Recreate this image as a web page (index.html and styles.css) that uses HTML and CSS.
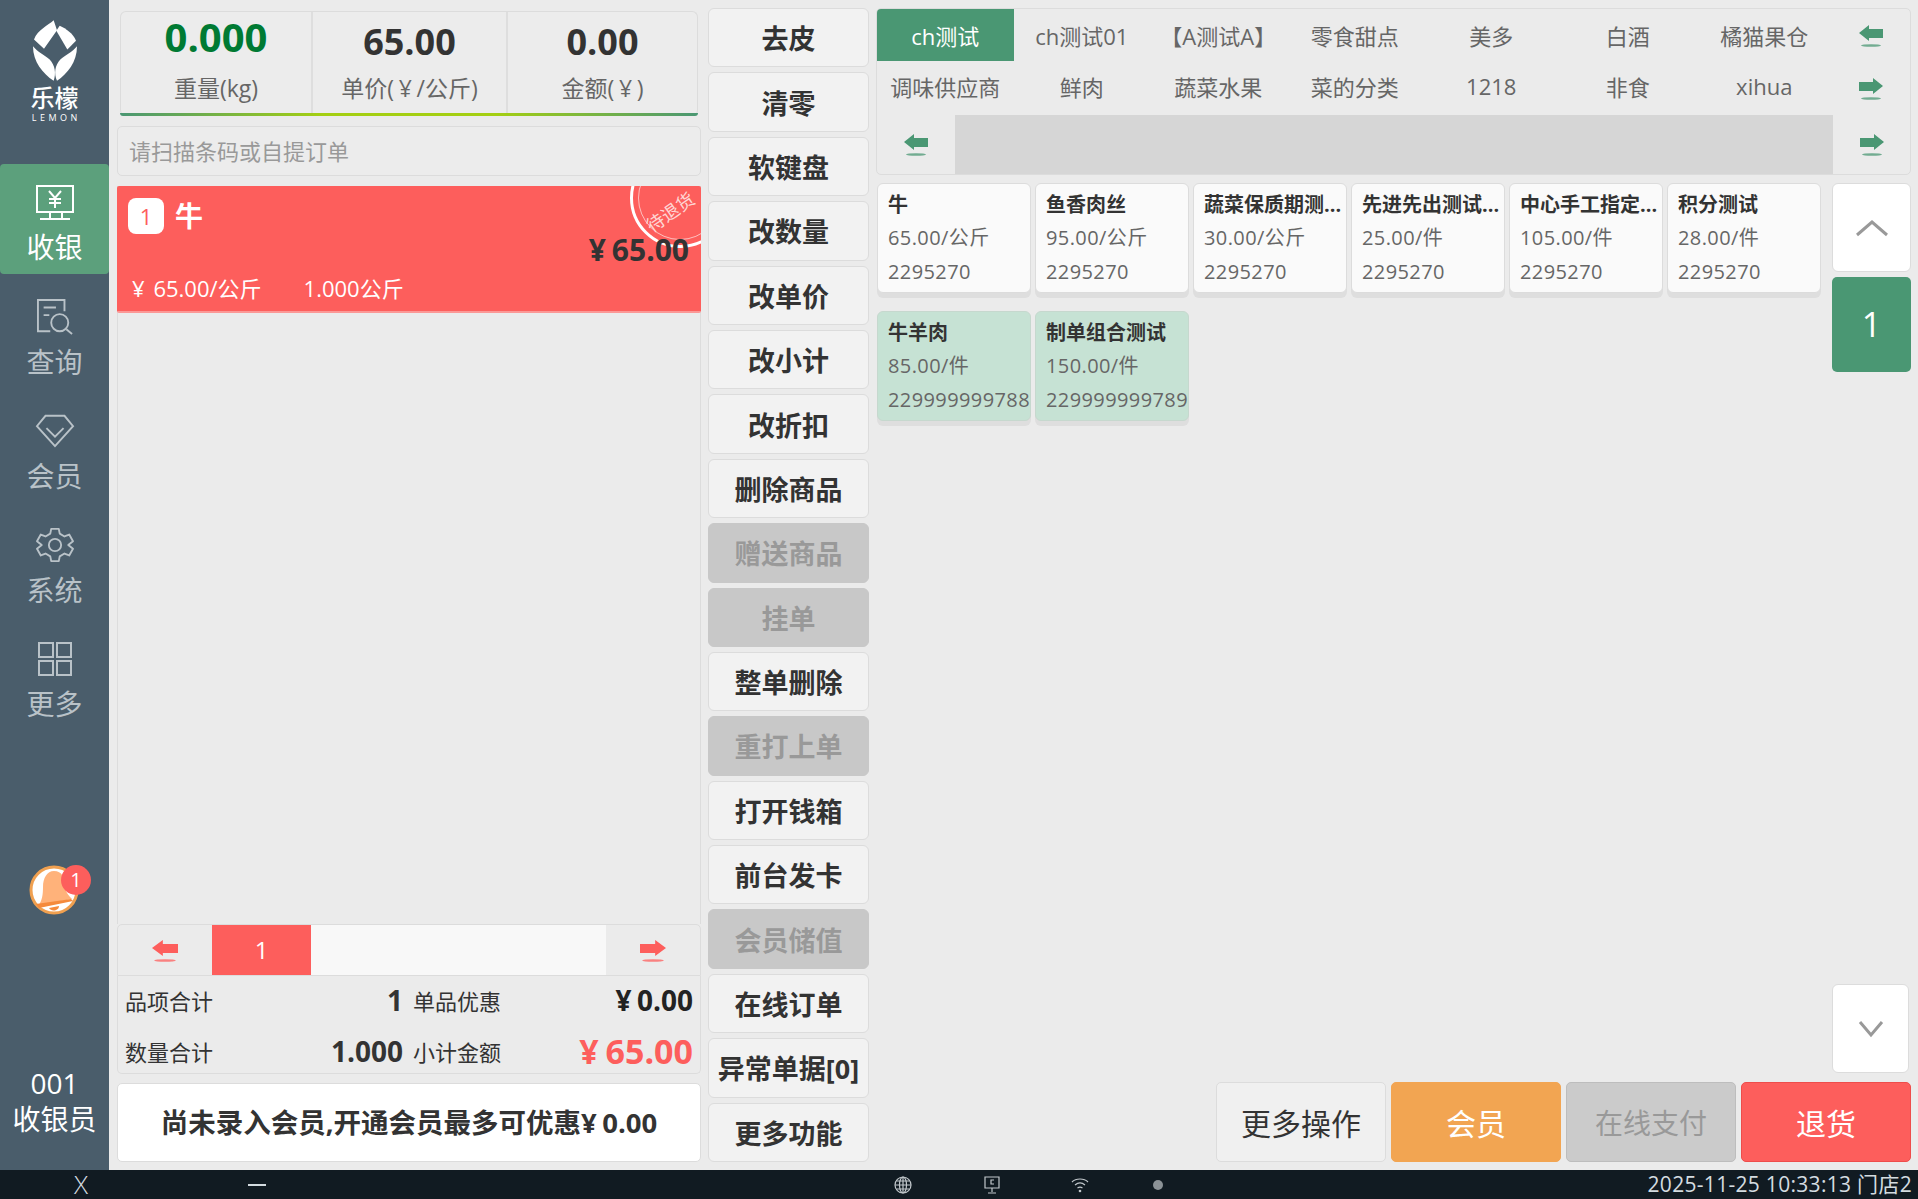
FILE: index.html
```html
<!DOCTYPE html>
<html lang="zh-CN">
<head>
<meta charset="utf-8">
<title>乐檬收银</title>
<link rel="stylesheet" href="styles.css">
</head>
<body>
<svg class="defs" width="0" height="0">
  <defs>
    <symbol id="arrow-left" viewBox="0 0 24 23" preserveAspectRatio="none">
      <path d="M0 9 L10 1 V5 H24 V14 H10 V17 Z" fill="currentColor"/>
      <ellipse cx="12" cy="21.5" rx="10" ry="1.3" fill="currentColor" opacity=".75"/>
    </symbol>
    <symbol id="arrow-right" viewBox="0 0 24 23" preserveAspectRatio="none">
      <path d="M24 9 L14 1 V5 H0 V14 H14 V17 Z" fill="currentColor"/>
      <ellipse cx="12" cy="21.5" rx="10" ry="1.3" fill="currentColor" opacity=".75"/>
    </symbol>
  </defs>
</svg>
<div class="app">
  <aside class="sidebar">
    <div class="logo">
      <svg class="logo-mark" viewBox="0 0 132 182" fill="#fff">
        <path d="M62 0 C45 16 14 28 3 58 L33 86 L72 30 Z"/>
        <path d="M80 17 L70 32 L103 88 L129 62 C120 40 100 26 80 17 Z"/>
        <path d="M0 78 C0 125 30 160 62 182 C70 160 66 135 50 118 C36 104 14 96 0 78 Z"/>
        <path d="M132 78 C132 125 104 160 72 182 C62 160 66 135 82 118 C96 104 118 96 132 78 Z"/>
      </svg>
      <div class="logo-cn">乐檬</div>
      <div class="logo-en">LEMON</div>
    </div>
    <nav class="nav">
      <a class="nav-item active">
        <svg class="nav-icon" viewBox="0 0 38 36"><path d="M1 1H37V27H1ZM14 27V34M26 27V34M4 34H34"/><path d="M13 6L19 13L25 6M19 13V23M13 14H25M13 18H25"/></svg>
        <span>收银</span>
      </a>
      <a class="nav-item">
        <svg class="nav-icon" viewBox="0 0 38 38"><path d="M14 34H1V1H29V13"/><path d="M7 9H20M7 17H13"/><circle cx="24" cy="25" r="9"/><path d="M31 32L37 37"/></svg>
        <span>查询</span>
      </a>
      <a class="nav-item">
        <svg class="nav-icon" viewBox="0 0 40 34"><path d="M10 1H30L39 12L20 33L1 12Z"/><path d="M11 14L20 23L29 14"/></svg>
        <span>会员</span>
      </a>
      <a class="nav-item">
        <svg class="nav-icon" viewBox="0 0 38 38"><path d="M15 2H23L24 7L29 10L34 8L38 15L33 19L38 23L34 30L29 28L24 31L23 36H15L14 31L9 28L4 30L0 23L5 19L0 15L4 8L9 10L14 7Z" stroke-linejoin="round"/><circle cx="19" cy="19" r="6.5"/></svg>
        <span>系统</span>
      </a>
      <a class="nav-item">
        <svg class="nav-icon" viewBox="-1 -1 36 36"><path d="M1 1H15V15H1ZM19 1H33V15H19ZM1 19H15V33H1ZM19 19H33V33H19Z"/></svg>
        <span>更多</span>
      </a>
    </nav>
    <div class="bell">
      <svg class="bell-icon" viewBox="0 0 50 50">
        <circle cx="25" cy="25" r="23" fill="#fff" stroke="#f0a050" stroke-width="3"/>
        <path d="M25 6 C33 6 36 13 36 20 C36 27 40 31 43 34 L10 40 C13 35 14 30 14 22 C14 13 18 6 25 6 Z" fill="#ffb27a"/>
        <path d="M7 39 L42 34 L44 36 L10 43 Z" fill="#f58a3c"/>
        <path d="M20 43 L30 41 C30 46 22 47 20 43 Z" fill="#f58a3c"/>
      </svg>
      <span class="bell-badge">1</span>
    </div>
    <div class="cashier">
      <div>001</div>
      <div>收银员</div>
    </div>
  </aside>

  <main class="content">
    <section class="cart-col">
      <div class="display">
        <div class="display-cell">
          <div class="display-value weight">0.000</div>
          <div class="display-label">重量(kg)</div>
        </div>
        <div class="display-cell">
          <div class="display-value">65.00</div>
          <div class="display-label">单价(<span class="yen">¥</span>/公斤)</div>
        </div>
        <div class="display-cell">
          <div class="display-value">0.00</div>
          <div class="display-label">金额(<span class="yen">¥</span>)</div>
        </div>
      </div>
      <div class="search">请扫描条码或自提订单</div>
      <div class="cart-list">
        <div class="cart-item">
          <div class="cart-head">
            <span class="cart-no">1</span>
            <span class="cart-name">牛</span>
          </div>
          <div class="cart-total"><span class="yen">¥</span>65.00</div>
          <div class="cart-sub">
            <span class="cart-price"><span class="yen">¥</span>65.00/公斤</span>
            <span>1.000公斤</span>
          </div>
          <div class="stamp"><span>待退货</span></div>
        </div>
      </div>
      <div class="cart-pager">
        <button class="pager-arrow"><svg class="arrow"><use href="#arrow-left"/></svg></button>
        <span class="pager-current">1</span>
        <span class="pager-rest"></span>
        <button class="pager-arrow"><svg class="arrow"><use href="#arrow-right"/></svg></button>
      </div>
      <div class="summary">
        <span>品项合计</span>
        <b class="sum-num">1</b>
        <span>单品优惠</span>
        <b class="sum-amt discount"><span class="yen">¥</span>0.00</b>
        <span>数量合计</span>
        <b class="sum-num">1.000</b>
        <span>小计金额</span>
        <b class="sum-amt subtotal"><span class="yen">¥</span>65.00</b>
      </div>
      <div class="member-tip">尚未录入会员,开通会员最多可优惠<span class="yen">¥</span>0.00</div>
    </section>

    <section class="func-col">
      <button class="func">去皮</button>
      <button class="func">清零</button>
      <button class="func">软键盘</button>
      <button class="func">改数量</button>
      <button class="func">改单价</button>
      <button class="func">改小计</button>
      <button class="func">改折扣</button>
      <button class="func">删除商品</button>
      <button class="func off">赠送商品</button>
      <button class="func off">挂单</button>
      <button class="func">整单删除</button>
      <button class="func off">重打上单</button>
      <button class="func">打开钱箱</button>
      <button class="func">前台发卡</button>
      <button class="func off">会员储值</button>
      <button class="func">在线订单</button>
      <button class="func">异常单据[0]</button>
      <button class="func">更多功能</button>
    </section>

    <section class="goods-col">
      <div class="tabs">
        <span class="tab active">ch测试</span>
        <span class="tab">ch测试01</span>
        <span class="tab">【A测试A】</span>
        <span class="tab">零食甜点</span>
        <span class="tab">美多</span>
        <span class="tab">白酒</span>
        <span class="tab">橘猫果仓</span>
        <span class="tab-arrow"><svg class="arrow"><use href="#arrow-left"/></svg></span>
        <span class="tab lower">调味供应商</span>
        <span class="tab lower">鲜肉</span>
        <span class="tab lower">蔬菜水果</span>
        <span class="tab lower">菜的分类</span>
        <span class="tab lower">1218</span>
        <span class="tab lower">非食</span>
        <span class="tab lower">xihua</span>
        <span class="tab-arrow"><svg class="arrow"><use href="#arrow-right"/></svg></span>
        <div class="tab-scroll">
          <span class="scroll-btn wide"><svg class="arrow"><use href="#arrow-left"/></svg></span>
          <span class="scroll-track"></span>
          <span class="scroll-btn end"><svg class="arrow"><use href="#arrow-right"/></svg></span>
        </div>
      </div>
      <div class="goods-body">
        <div class="goods-grid">
          <article class="card"><h3>牛</h3><p>65.00/公斤</p><p>2295270</p></article>
          <article class="card"><h3>鱼香肉丝</h3><p>95.00/公斤</p><p>2295270</p></article>
          <article class="card"><h3>蔬菜保质期测...</h3><p>30.00/公斤</p><p>2295270</p></article>
          <article class="card"><h3>先进先出测试...</h3><p>25.00/件</p><p>2295270</p></article>
          <article class="card"><h3>中心手工指定...</h3><p>105.00/件</p><p>2295270</p></article>
          <article class="card"><h3>积分测试</h3><p>28.00/件</p><p>2295270</p></article>
          <article class="card combo"><h3>牛羊肉</h3><p>85.00/件</p><p>229999999788</p></article>
          <article class="card combo"><h3>制单组合测试</h3><p>150.00/件</p><p>229999999789</p></article>
        </div>
        <div class="goods-pager">
          <button class="page-btn"><svg class="chev" viewBox="0 0 34 18"><path d="M2 16L17 3L32 16"/></svg></button>
          <span class="page-no">1</span>
          <button class="page-btn page-down"><svg class="chev" viewBox="0 0 26 18"><path d="M2 2L13 15L24 2"/></svg></button>
        </div>
      </div>
      <div class="actions">
        <button class="action more">更多操作</button>
        <button class="action vip">会员</button>
        <button class="action pay">在线支付</button>
        <button class="action refund">退货</button>
      </div>
    </section>
  </main>
</div>
<footer class="statusbar">
  <span class="st-close">X</span>
  <span class="st-min"></span>
  <svg class="st-icon st-globe" viewBox="0 0 18 18"><circle cx="9" cy="9" r="8"/><ellipse cx="9" cy="9" rx="3.5" ry="8"/><path d="M1 9H17M2.5 5H15.5M2.5 13H15.5M9 1V17"/></svg>
  <svg class="st-icon st-screen" viewBox="0 0 18 18"><path d="M2 1H16V12H2ZM9 12V16M5 17H13"/><path d="M11 4H8V8H11"/></svg>
  <svg class="st-icon st-wifi" viewBox="0 0 18 18"><path d="M1 6C5 2 13 2 17 6M4 9C7 6.500 11 6.500 14 9M6.500 12C8 11 10 11 11.500 12"/><circle class="st-fill" cx="9" cy="15" r="1.300"/></svg>
  <span class="st-dot"></span>
  <span class="st-time">2025-11-25 10:33:13 门店2</span>
</footer>
</body>
</html>
```

FILE: styles.css
```css
* { box-sizing: border-box; }
html, body { margin: 0; padding: 0; height: 100%; }
body {
  width: 1918px;
  height: 1199px;
  overflow: hidden;
  background: #ebebeb;
  color: #333;
  font-family: "Open Sans", "Noto Sans CJK SC", sans-serif;
  display: flex;
  flex-direction: column;
}
.defs { position: absolute; }
button { font-family: inherit; cursor: pointer; }
.yen { margin-right: .2em; }

.app { flex: 1; display: flex; min-height: 0; }

/* sidebar */
.sidebar {
  width: 109px;
  background: #4a5d6b;
  display: flex;
  flex-direction: column;
  align-items: stretch;
  flex: none;
}
.logo { padding-top: 20px; height: 164px; display: flex; flex-direction: column; align-items: center; color: #fff; }
.logo-mark { width: 44px; height: 61px; }
.logo-cn { font-size: 24px; line-height: 30px; margin-top: 2px; font-weight: 500; }
.logo-en { font-size: 9px; line-height: 9px; letter-spacing: 3.500px; margin-right: -3.500px; }
.nav { display: flex; flex-direction: column; }
.nav-item {
  height: 114px;
  display: flex;
  flex-direction: column;
  align-items: center;
  padding-top: 21px;
  color: #b9c2c8;
  font-size: 28px;
  line-height: 34px;
}
.nav-item.active { height: 110px; margin-bottom: 4px; background: #5ca07c; color: #fff; border-radius: 4px; }
.nav-icon { width: 38px; height: 36px; margin-bottom: 10px; fill: none; stroke: currentColor; stroke-width: 2; overflow: visible; flex: none; }
.nav-item.active .nav-icon { margin-bottom: 9px; }
.bell { position: relative; margin: 131px 0 0 29px; width: 50px; height: 50px; }
.bell-icon { width: 50px; height: 50px; display: block; }
.bell-badge {
  position: absolute; left: 32px; top: 0;
  width: 30px; height: 30px; border-radius: 50%;
  background: #fd5e5c; color: #fff;
  font-size: 20px; line-height: 30px; text-align: center;
}
.cashier { margin-top: auto; padding-bottom: 33px; color: #fff; font-size: 28px; line-height: 36px; text-align: center; }

/* content */
.content { flex: 1; display: flex; gap: 7px; padding: 8px 7px 8px 8px; min-width: 0; }

.cart-col { width: 584px; flex: none; display: flex; flex-direction: column; }
.display {
  margin: 3px 3px 0;
  height: 105px;
  display: grid;
  grid-template-columns: 190px 195px 1fr;
  border: 1px solid #dcdcdc;
  border-bottom: 0;
  border-radius: 6px;
  background: #ececec;
  position: relative;
}
.display::after {
  content: "";
  position: absolute; left: -1px; right: -1px; bottom: 0; height: 3px;
  border-radius: 0 0 6px 6px;
  background: linear-gradient(90deg, #4a9773, #a4cf12 35%, #a4cf12 65%, #4a9773);
}
.display-cell { text-align: center; border-left: 2px solid #dedede; }
.display-cell:first-child { border-left: 0; }
.display-value { font-size: 36px; line-height: 50px; font-weight: 700; color: #333; margin-top: 5px; height: 50px; }
.display-value.weight { font-size: 40px; color: #007a33; margin-top: 0; height: 55px; }
.display-label { font-size: 23px; line-height: 30px; color: #666; margin-top: 6px; white-space: nowrap; }
.display-label .yen { margin: 0 .2em; }

.search {
  margin-top: 10px;
  height: 50px;
  border: 1px solid #dcdcdc;
  border-radius: 5px;
  padding-left: 11px;
  font-size: 22px;
  line-height: 48px;
  color: #999;
  background: #ececec;
}
.cart-list { margin-top: 10px; flex: 1; border: 1px solid #dcdcdc; border-width: 0 1px; }
.cart-item {
  position: relative;
  height: 127px;
  margin: 0 -1px;
  background: #fd5e5c;
  border-bottom: 2px solid #fb9896;
  overflow: hidden;
  border-radius: 2px;
  color: #fff;
}
.cart-head { display: flex; align-items: center; gap: 11px; padding: 11px 0 0 11px; position: relative; }
.cart-no { width: 36px; height: 36px; border-radius: 8px; background: #fff; color: #fd5e5c; font-size: 22px; line-height: 36px; text-align: center; }
.cart-name { font-size: 28px; font-weight: 700; line-height: 38px; }
.cart-total { position: absolute; right: 12px; top: 44px; font-size: 30px; line-height: 40px; font-weight: 700; color: #333; z-index: 1; }
.cart-sub { position: absolute; left: 15px; top: 87px; font-size: 22px; line-height: 30px; display: flex; gap: 42px; }
.cart-price .yen { margin-right: .4em; }
.stamp {
  position: absolute; left: 513px; top: -38px;
  width: 100px; height: 100px;
  border: 3px solid #fff; border-radius: 50%;
  display: flex; align-items: center; justify-content: center;
}
.stamp::before { content: ""; position: absolute; inset: 5px; border: 1px solid rgba(255,255,255,.6); border-radius: 50%; }
.stamp span { font-size: 18px; line-height: 22px; color: #ffd5d4; transform: translate(-10px, 14px) rotate(-35deg); white-space: nowrap; }

.cart-pager {
  height: 52px;
  display: flex;
  border: 1px solid #dcdcdc;
  border-radius: 5px 5px 0 0;
  background: #ebebeb;
}
.pager-arrow { width: 94px; border: 0; background: transparent; color: #fd5e5c; display: flex; align-items: center; justify-content: center; padding: 0; }
.pager-arrow .arrow { width: 26px; height: 23px; }
.pager-current { width: 99px; background: #fd5e5c; color: #fff; text-align: center; font-size: 24px; line-height: 50px; }
.pager-rest { flex: 1; background: #f8f8f8; }
.arrow { width: 24px; height: 23px; display: block; }

.summary {
  height: 98px;
  display: grid;
  grid-template-columns: 100px 188px 98px 1fr;
  grid-template-rows: 47px 45px;
  row-gap: 5px;
  align-items: center;
  padding: 0 7px;
  border: 1px solid #dcdcdc;
  border-top: 0;
  border-radius: 0 0 5px 5px;
  font-size: 22px;
  white-space: nowrap;
}
.sum-num { font-size: 28px; text-align: right; padding-right: 10px; }
.sum-amt { text-align: right; font-size: 28px; }
.sum-amt.discount { color: #222; }
.sum-amt.subtotal { color: #fd5e5c; font-size: 34px; }
.member-tip {
  margin-top: 9px;
  height: 79px;
  border: 1px solid #dcdcdc;
  border-radius: 5px;
  background: #fff;
  font-size: 27.500px;
  font-weight: 700;
  line-height: 78px;
  text-align: center;
  white-space: nowrap;
}

.func-col { width: 161px; flex: none; display: flex; flex-direction: column; gap: 5px; }
.func {
  flex: 1;
  padding: 0;
  border: 1px solid #dcdcdc;
  border-radius: 6px;
  background: #f2f2f2;
  color: #333;
  font-size: 27px;
  font-weight: 700;
  white-space: nowrap;
}
.func.off { background: #c8c8c8; color: #999; border-color: #c8c8c8; }

.goods-col { flex: 1; display: flex; flex-direction: column; min-width: 0; }
.tabs {
  display: grid;
  grid-template-columns: repeat(7, 136.500px) 1fr;
  grid-template-rows: 52px 54px 59px;
  border: 1px solid #dcdcdc;
  border-radius: 5px;
  overflow: hidden;
  font-size: 22px;
  color: #666;
}
.tab { display: flex; align-items: center; justify-content: center; white-space: nowrap; padding-bottom: 1px; }
.tab.lower { padding-bottom: 4px; }
.tab.active { background: #4a9773; color: #fff; }
.tab-arrow { display: flex; align-items: center; justify-content: center; color: #4a9773; padding-right: 1px; }
.tab-scroll { grid-column: 1 / -1; display: flex; }
.scroll-btn { width: 78px; display: flex; align-items: center; justify-content: center; color: #4a9773; }
.scroll-btn.end { width: 77px; }
.scroll-track { flex: 1; background: #d6d6d6; }

.goods-body { flex: 1; display: flex; justify-content: space-between; margin-top: 8px; min-height: 0; }
.goods-grid {
  margin-left: 1px;
  display: grid;
  grid-template-columns: repeat(6, 154px);
  grid-auto-rows: 114px;
  gap: 14px 4px;
  align-content: start;
}
.card {
  background: #fafafa;
  border: 1px solid #dcdcdc;
  border-radius: 6px;
  padding: 4px 0 0 10px;
  height: 110px;
  box-shadow: 0 5px 0 #dedede;
}
.card h3 { margin: 0; font-size: 20px; line-height: 33px; font-weight: 700; color: #333; white-space: nowrap; }
.card p { margin: 0; font-size: 20px; line-height: 34px; color: #666; white-space: nowrap; letter-spacing: .4px; }
.card.combo { background: #c6e2d4; border-color: #c6d8ce; }

.goods-pager { width: 79px; display: flex; flex-direction: column; }
.page-btn {
  height: 89px;
  padding: 0;
  border: 1px solid #dcdcdc;
  border-radius: 6px;
  background: #fff;
  display: flex;
  align-items: center;
  justify-content: center;
  flex: none;
}
.page-down { margin-top: auto; margin-bottom: 9px; width: 77px; }
.page-no { margin-top: 5px; height: 95px; background: #4a9773; border-radius: 5px; color: #fff; text-align: center; font-size: 34px; line-height: 95px; flex: none; }
.chev { width: 34px; height: 18px; fill: none; stroke: #999; stroke-width: 3; }
.page-down .chev { width: 30px; height: 18px; }

.actions { display: flex; gap: 5px; height: 80px; margin-left: 340px; flex: none; }
.action {
  flex: 1;
  padding: 0;
  border-radius: 5px;
  border: 1px solid #dcdcdc;
  font-size: 30px;
  background: #f0f0f0;
  color: #333;
}
.action.vip { background: #f2a552; border-color: #f2a552; color: #fff; }
.action.pay { background: #cbcbcb; border-color: #bdbdbd; color: #999; font-size: 28px; }
.action.refund { background: #fd5e5c; border-color: #ee4d4b; color: #fff; }

/* status bar */
.statusbar {
  height: 29px;
  flex: none;
  background: #111b22;
  color: #d4dce0;
  display: flex;
  align-items: center;
  padding-right: 6px;
}
.st-close { margin-left: 71px; width: 20px; text-align: center; font-size: 26px; font-weight: 300; line-height: 29px; }
.st-min { margin-left: 157px; width: 18px; height: 2px; background: #d4dce0; }
.st-icon { width: 18px; height: 18px; fill: none; stroke: #c2c8cc; stroke-width: 1.200; flex: none; }
.st-fill { fill: #c2c8cc; stroke: none; }
.st-globe { margin-left: 628px; }
.st-screen { margin-left: 71px; }
.st-wifi { margin-left: 70px; }
.st-dot { margin-left: 64px; width: 10px; height: 10px; border-radius: 50%; background: #8b9296; }
.st-time { margin-left: auto; font-size: 21px; letter-spacing: .3px; line-height: 29px; white-space: nowrap; }
```
